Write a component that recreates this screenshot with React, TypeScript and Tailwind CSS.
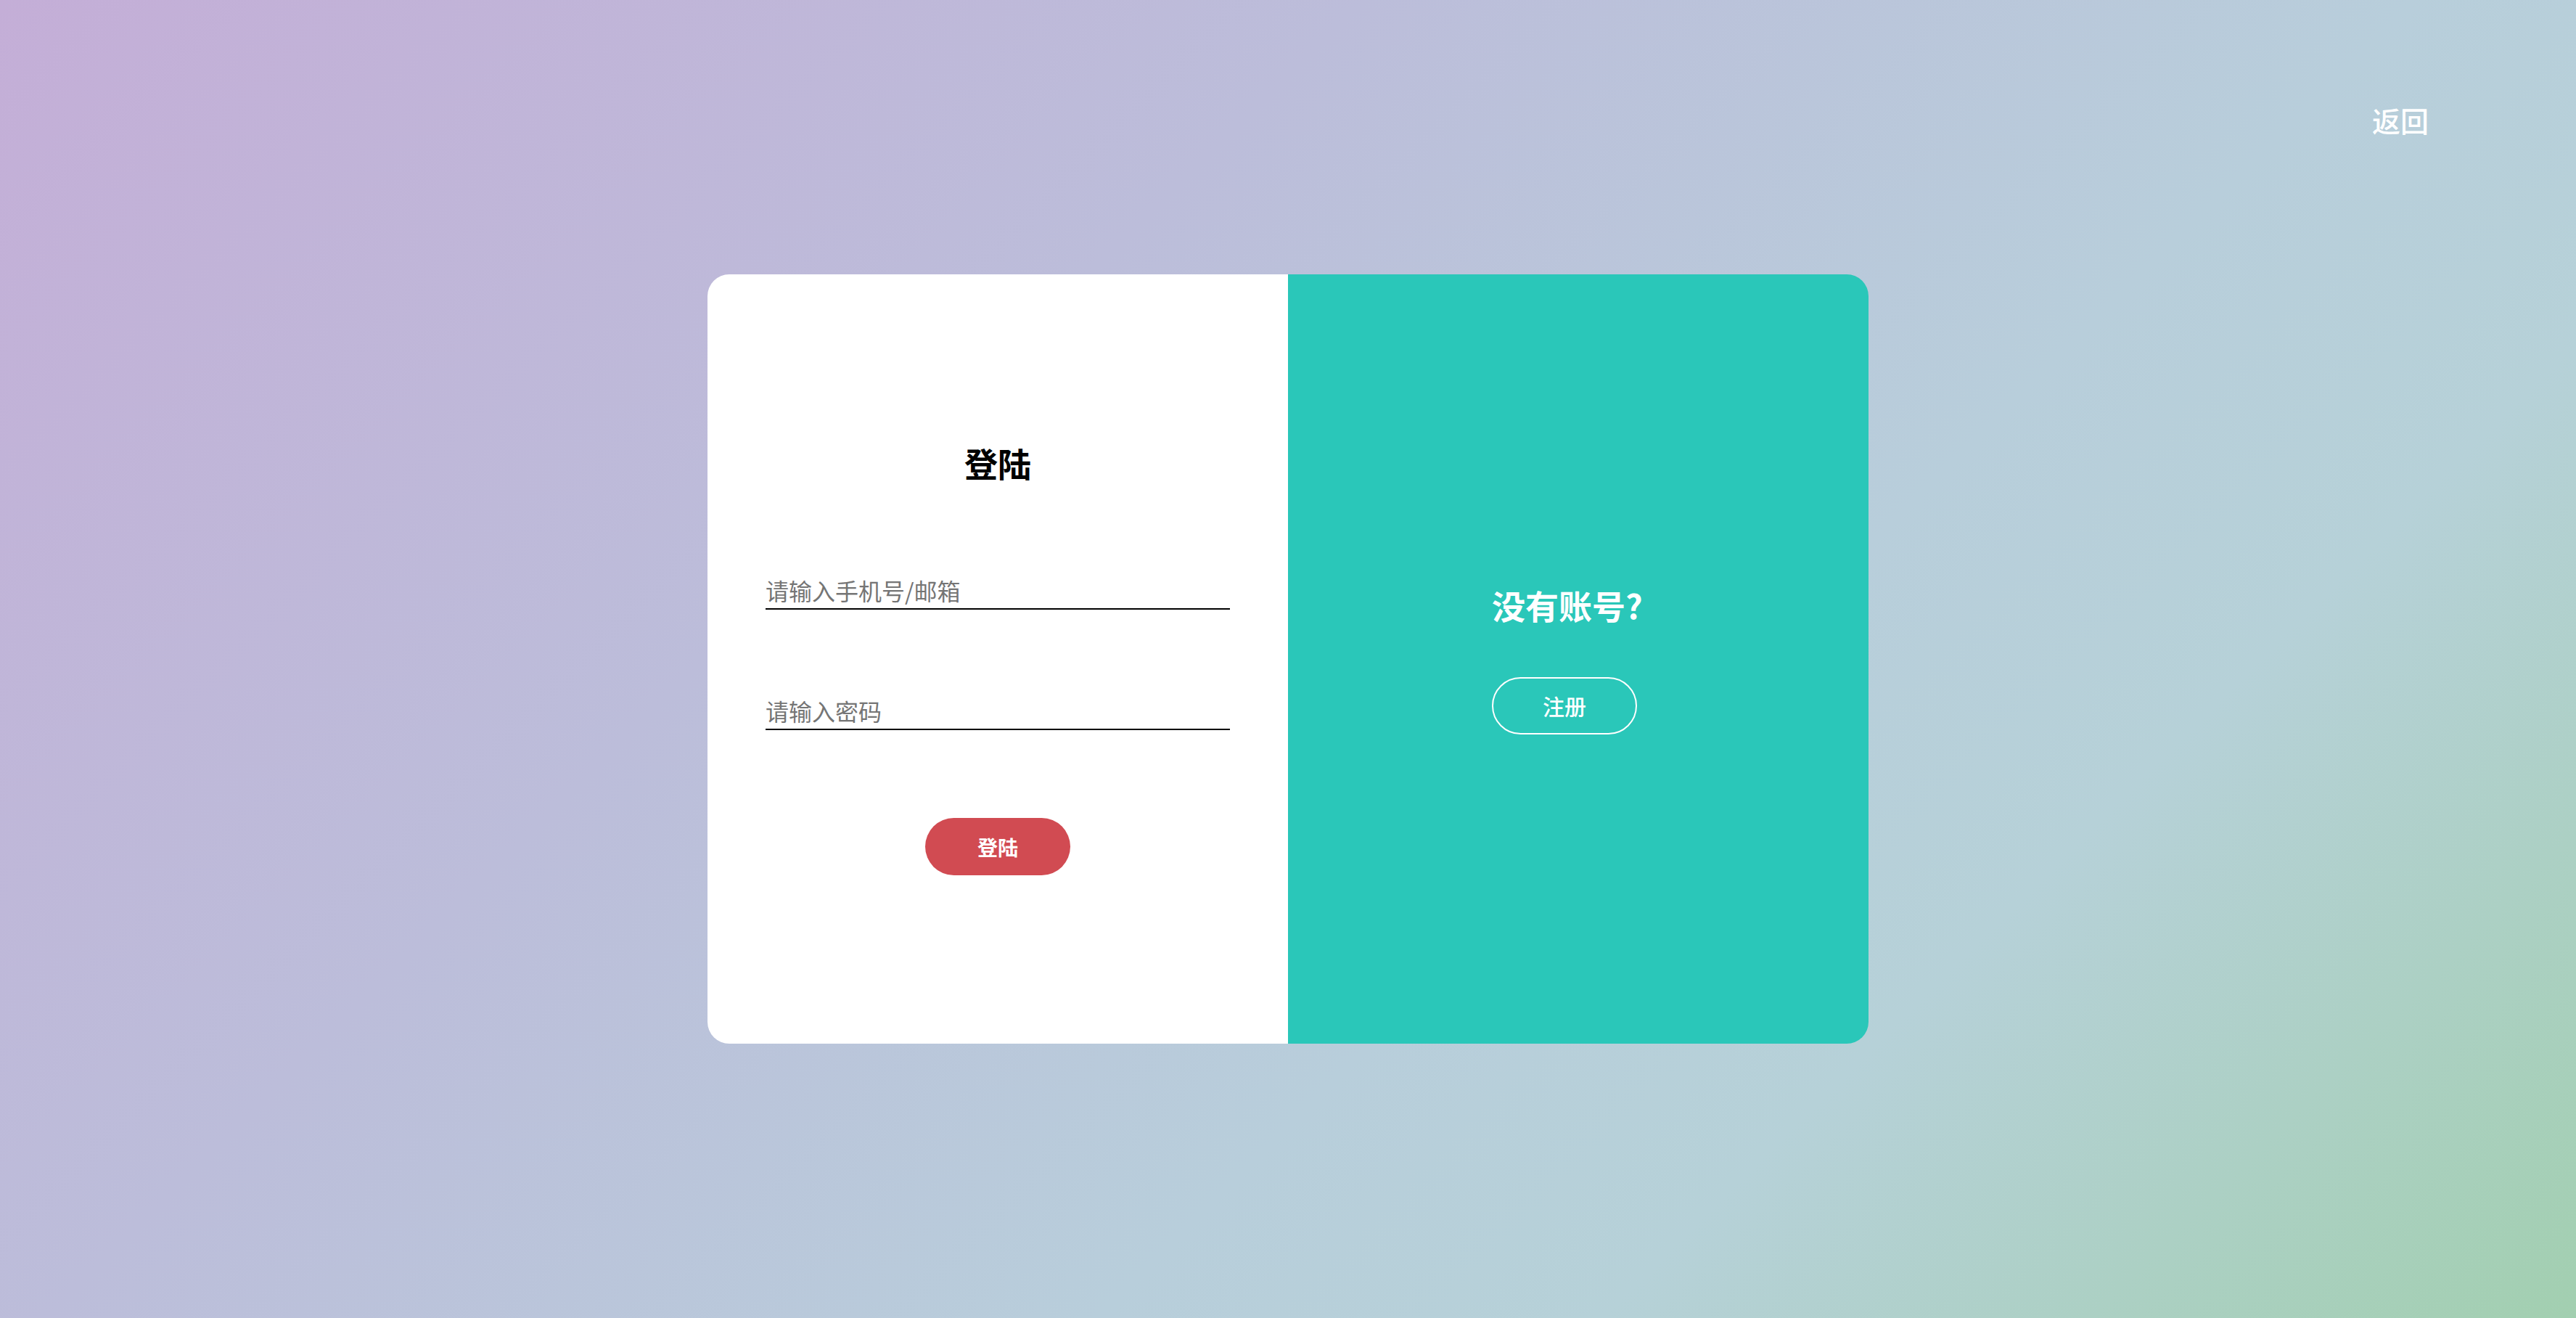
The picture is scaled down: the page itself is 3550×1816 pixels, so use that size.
import { useState } from 'react'

const font = { fontFamily: '"Noto Sans CJK SC", "Noto Sans", sans-serif' }

export default function App() {
  const [account, setAccount] = useState('')
  const [password, setPassword] = useState('')

  return (
    <div
      style={font}
      className="relative flex h-[1816px] w-full items-center justify-center bg-[linear-gradient(135deg,#c4aed7_0%,#bcbdda_35%,#b8cedb_62%,#b6d1d8_75%,#a2cfb0_100%)]"
    >
      <a
        href="#"
        className="absolute right-[203px] top-[146px] text-[39px] font-medium leading-none text-white"
      >
        返回
      </a>

      <div className="flex h-[1060px] w-[1600px] overflow-hidden rounded-[30px]">
        <div className="flex w-[800px] flex-col items-center bg-white pt-[236px]">
          <h2 className="text-[46px] font-bold leading-none text-black">登陆</h2>

          <input
            value={account}
            onChange={(e) => setAccount(e.target.value)}
            placeholder="请输入手机号/邮箱"
            className="mt-[132px] h-[48px] w-[640px] border-b-2 border-black bg-transparent pb-[4px] text-[32px] leading-none outline-none placeholder:text-[#757575]"
          />
          <input
            type="password"
            value={password}
            onChange={(e) => setPassword(e.target.value)}
            placeholder="请输入密码"
            className="mt-[118px] h-[48px] w-[640px] border-b-2 border-black bg-transparent pb-[4px] text-[32px] leading-none outline-none placeholder:text-[#757575]"
          />

          <button className="mt-[121px] h-[79px] w-[200px] rounded-full bg-[#d14b52] text-[28px] font-semibold text-white">
            登陆
          </button>
        </div>

        <div className="flex w-[800px] items-center justify-center bg-[#2ac7b9] pt-[6px]">
          <div className="flex w-[238px] flex-col items-start">
            <h2 className="text-[46px] font-bold leading-none text-white">没有账号?</h2>
            <button className="mt-[77px] h-[79px] w-[200px] rounded-full border-2 border-white text-[30px] font-medium text-white">
              注册
            </button>
          </div>
        </div>
      </div>
    </div>
  )
}
